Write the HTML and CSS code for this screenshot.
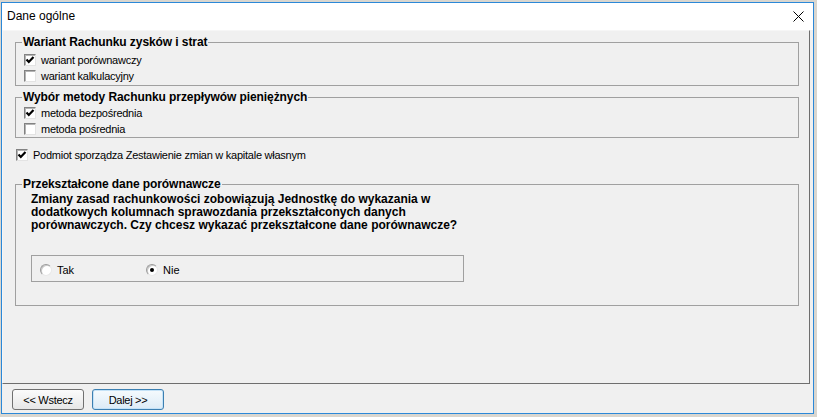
FILE: index.html
```html
<!DOCTYPE html>
<html lang="pl">
<head>
    <meta charset="UTF-8">
    <title>Dane ogólne</title>
    <link rel="stylesheet" href="styles.css">
</head>
<body>
  <div class="window">
    <div class="titlebar">
      <span class="title">Dane ogólne</span>
      <svg class="close" width="11" height="11" viewBox="0 0 11 11">
        <path d="M0.5 0.5 L10.5 10.5 M10.5 0.5 L0.5 10.5" stroke="#000" stroke-width="1" fill="none"/>
      </svg>
    </div>

    <div class="panel">
      <fieldset class="group group-rzis">
        <legend>Wariant Rachunku zysków i strat</legend>
        <div class="check"><span class="box"><svg viewBox="0 0 10 10"><path d="M1.5 4.5 L3.8 7 L8.5 2" /></svg></span>wariant porównawczy</div>
        <div class="check"><span class="box"></span>wariant kalkulacyjny</div>
      </fieldset>

      <fieldset class="group group-cash">
        <legend>Wybór metody Rachunku przepływów pieniężnych</legend>
        <div class="check"><span class="box"><svg viewBox="0 0 10 10"><path d="M1.5 4.5 L3.8 7 L8.5 2" /></svg></span>metoda bezpośrednia</div>
        <div class="check"><span class="box"></span>metoda pośrednia</div>
      </fieldset>

      <div class="check check-equity"><span class="box"><svg viewBox="0 0 10 10"><path d="M1.5 4.5 L3.8 7 L8.5 2" /></svg></span>Podmiot sporządza Zestawienie zmian w kapitale własnym</div>

      <fieldset class="group group-restated">
        <legend>Przekształcone dane porównawcze</legend>
        <p class="question">Zmiany zasad rachunkowości zobowiązują Jednostkę do wykazania w dodatkowych kolumnach sprawozdania przekształconych danych porównawczych. Czy chcesz wykazać przekształcone dane porównawcze?</p>
        <div class="radio-box">
          <div class="radio"><span class="dot"></span>Tak</div>
          <div class="radio"><span class="dot checked"></span>Nie</div>
        </div>
      </fieldset>
    </div>

    <div class="buttons">
      <button class="btn">&lt;&lt; Wstecz</button>
      <button class="btn btn-default">Dalej &gt;&gt;</button>
    </div>
  </div>
</body>
</html>
```

FILE: styles.css
```css
* {
    margin: 0;
    padding: 0;
    box-sizing: border-box;
}

body {
    font-family: 'Liberation Sans', Arial, sans-serif;
    font-size: 11px;
    color: #000;
    background: #d9d6cf;
    overflow: hidden;
}

.window {
    margin: 2px 0 0 1px;
    width: 813px;
    height: 412px;
    border: 1px solid #2b88d8;
    background: #f0f0f0;
    display: flex;
    flex-direction: column;
}

.titlebar {
    height: 27px;
    flex: none;
    background: #fff;
    display: flex;
    align-items: center;
    justify-content: space-between;
    padding: 0 9px 1px 5px;
}

.title {
    font-size: 12px;
}

.close {
    display: block;
}

/* main area with the dark lower-right edge */
.panel {
    height: 354px;
    flex: none;
    margin-right: 3px;
    border: 1px solid;
    border-color: #f6f6f6 #6e6e6e #6e6e6e #f6f6f6;
    padding: 5px 10px 0 12px;
}

.group {
    border: 1px solid #a0a0a0;
    padding: 0 0 0 7px;
    min-inline-size: 0;
}

.group legend {
    font-weight: bold;
    font-size: 12px;
    line-height: 13px;
    letter-spacing: -0.08px;
    padding: 0 1px;
    margin-left: -1px;
}

.group-rzis {
    padding-top: 3px;
    padding-bottom: 1px;
}

.group-cash {
    margin-top: 5px;
    padding-top: 1px;
}

.group-restated {
    margin-top: 15px;
    padding-bottom: 23px;
}

.check {
    display: flex;
    align-items: center;
    height: 16px;
    margin-left: 1px;
    letter-spacing: -0.25px;
}

.check-equity {
    margin-top: 9px;
    margin-left: 1px;
}

.box {
    width: 12px;
    height: 12px;
    margin-right: 5px;
    background: #fff;
    border: 1px solid;
    border-color: #828282 #e3e3e3 #e3e3e3 #828282;
    box-shadow: inset 1px 1px 0 #b4b4b4;
    display: flex;
    align-items: center;
    justify-content: center;
}

.box svg {
    width: 10px;
    height: 10px;
    fill: none;
    stroke: #000;
    stroke-width: 2.2;
}

.question {
    font-weight: bold;
    font-size: 12px;
    line-height: 13px;
    width: 440px;
    margin: 2px 0 0 8px;
}

.radio-box {
    width: 433px;
    height: 27px;
    margin: 23px 0 0 8px;
    border: 1px solid #a0a0a0;
    display: flex;
    padding: 4px 0 0 8px;
}

.radio {
    width: 106px;
    height: 20px;
    display: flex;
    align-items: center;
}

.dot {
    width: 12px;
    height: 12px;
    margin-right: 5px;
    border-radius: 50%;
    background: #fff;
    border: 1px solid;
    border-color: #9a9a9a #e8e8e8 #e8e8e8 #9a9a9a;
    box-shadow: inset 1px 1px 0 #c8c8c8;
    display: flex;
    align-items: center;
    justify-content: center;
}

.dot.checked::after {
    content: '';
    width: 4px;
    height: 4px;
    border-radius: 50%;
    background: #000;
}

.buttons {
    display: flex;
    gap: 8px;
    padding: 5px 0 0 10px;
}

.btn {
    width: 72px;
    height: 21px;
    font-family: 'Liberation Sans', Arial, sans-serif;
    font-size: 11px;
    letter-spacing: -0.3px;
    color: #000;
    border: 1px solid #707070;
    border-radius: 3px;
    background: linear-gradient(#fbfbfb 0%, #f1f1f1 50%, #e6e6e6 100%);
}

.btn-default {
    border-color: #3c7fb1;
    box-shadow: inset 0 0 0 1px #c4e2f7;
    background: linear-gradient(#f5fafd 0%, #e9f3fa 50%, #dcebf6 100%);
}
```
